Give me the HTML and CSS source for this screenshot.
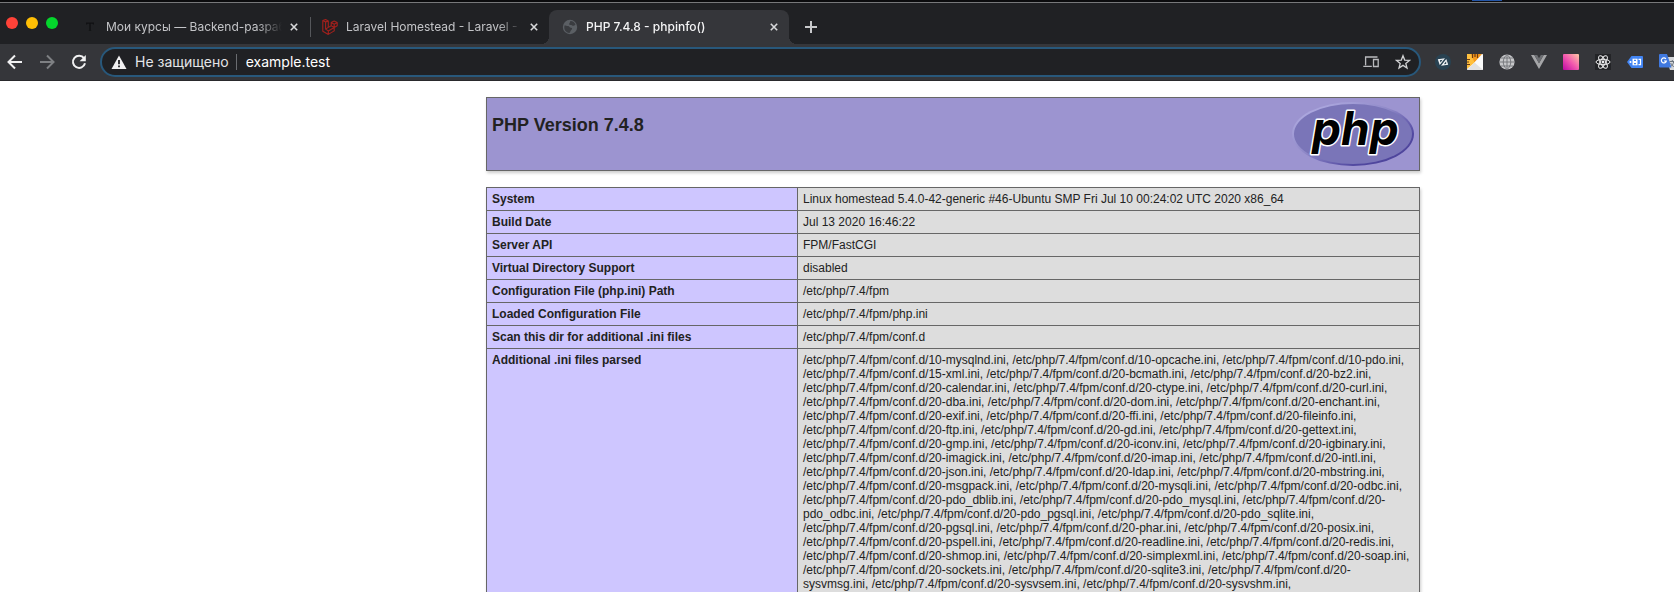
FILE: index.html
```html
<!DOCTYPE html>
<html lang="ru">
<head>
<meta charset="utf-8">
<title>PHP 7.4.8 - phpinfo()</title>
<link rel="stylesheet" href="styles.css">
</head>
<body>
<header class="browser">
  <div class="desktop-edge"><span class="desktop-mark"></span></div>
  <div class="tab-strip">
    <div class="lights">
      <button class="light light-close" aria-label="Close window"></button>
      <button class="light light-min" aria-label="Minimize window"></button>
      <button class="light light-max" aria-label="Zoom window"></button>
    </div>
    <nav class="tabs">
      <div class="tab">
        <svg class="favicon" viewBox="0 0 16 16"><path d="M4 3.500h8v2h-1l-.5-.8H8.700v6.300l1 .7H6.300l1-.7V4.700H5.500l-.5.800H4z" fill="#101113"/></svg>
        <a class="tab-title" href="#courses">Мои курсы — Backend-разработка</a>
        <button class="tab-close" aria-label="Close tab"><svg viewBox="0 0 10 10"><path d="M1 1l8 8M9 1l-8 8"/></svg></button>
      </div>
      <div class="tab tab-divided">
        <svg class="favicon" viewBox="0 0 16 16" fill="none" stroke="#a3201c" stroke-width="1.100" stroke-linejoin="round"><path d="M.8 1.500L3.600.6l2.700 1.500v6.300l2.900-1.700V3.500l3-1.500 3 1.500v3.300l-3 1.700v3.400l-5.900 3.500-5.500-3.200zM.8 1.500l2.800 1.400 2.700-.8M3.600 2.900v7.200l2.700-1.700M3.600 10.100l2.700 1.800 5.900-3.400M6.300 11.900v3.500M9.200 3.500l3 1.700 3-1.700M12.200 5.200v3.300L9.200 6.700"/></svg>
        <a class="tab-title" href="#homestead">Laravel Homestead - Laravel - The PHP</a>
        <button class="tab-close" aria-label="Close tab"><svg viewBox="0 0 10 10"><path d="M1 1l8 8M9 1l-8 8"/></svg></button>
      </div>
      <div class="tab tab-active">
        <svg class="favicon" viewBox="0 0 16 16"><circle cx="8" cy="8" r="7.200" fill="#5b5f64"/><path d="M2.500 6.500c1.500 0 2 .5 3.500.5s1.500 1.800 3 1.800 1.300 1.500.3 2.200-.8 2.500-2 3C4 13.500 1.500 11 2.500 6.500zM8.500 2c-1 1-.2 1.800-1.200 2.600s.7 1.700 1.700 1.400 1.200 1 2.500.8 1.300-1 2-1C12.700 3.500 11 2 8.500 2z" fill="#3a3c40"/></svg>
        <a class="tab-title" href="#phpinfo">PHP 7.4.8 - phpinfo()</a>
        <button class="tab-close" aria-label="Close tab"><svg viewBox="0 0 10 10"><path d="M1 1l8 8M9 1l-8 8"/></svg></button>
      </div>
    </nav>
    <button class="new-tab" aria-label="New tab"><svg viewBox="0 0 12 12"><path d="M6 0v12M0 6h12"/></svg></button>
  </div>
  <div class="toolbar">
    <div class="nav-buttons">
      <button class="nav-button" aria-label="Back"><svg viewBox="0 0 16 16"><path d="M15 8H2M8 1.500L1.500 8 8 14.500"/></svg></button>
      <button class="nav-button nav-disabled" aria-label="Forward"><svg viewBox="0 0 16 16"><path d="M1 8h13M8 1.500L14.500 8 8 14.500"/></svg></button>
      <button class="nav-button" aria-label="Reload"><svg viewBox="0 0 16 16"><path d="M13 4.200A6.100 6.100 0 1 0 14 9.300"/><path d="M14.800 1v6.200H8.600z" fill="#f1f1f2" stroke="none"/></svg></button>
    </div>
    <div class="omnibox">
      <svg class="warning" viewBox="0 0 16 16"><path d="M8 1.500L15.500 15H.5z" fill="#f1f1f2"/><path d="M7.100 6h1.800v4.200H7.100zM7.100 11.500h1.800v1.700H7.100z" fill="#202124"/></svg>
      <label class="security" for="address">Не защищено</label>
      <input class="address" id="address" type="text" value="example.test" spellcheck="false">
      <button class="box-button" aria-label="Send to device"><svg viewBox="0 0 16 16" fill="none" stroke="#b9babd" stroke-width="1.300"><path d="M14.500 3H2.600v8.300M.3 12.300h8.500"/><path d="M10.500 5.500h4.700v7h-4.700z"/></svg></button>
      <button class="box-button" aria-label="Bookmark"><svg viewBox="0 0 16 16" fill="none" stroke="#d0d1d3" stroke-width="1.300"><path d="M8 1.700l1.700 4.400 4.700.3-3.600 3 1.200 4.600L8 11.400 4 14l1.200-4.600-3.600-3 4.700-.3z"/></svg></button>
    </div>
    <div class="extensions">
      <button class="extension" aria-label="Slash extension"><svg viewBox="0 0 16 16"><circle cx="8" cy="8" r="8" fill="#294252"/><path d="M2.800 5.200l7.200-.9-5.300 6.700zM13.200 10.800l-7.200.9 5.300-6.700z" fill="#f2f5f7"/><path d="M4.800 6.200l2.800-.4-2.100 2.700zM11.200 7.300v2.600l-2.300.3z" fill="#294252"/></svg></button>
      <button class="extension" aria-label="Ruler extension"><svg viewBox="0 0 16 16"><rect width="16" height="16" rx="1" fill="#f4f4f4"/><path d="M0 0h12L7 9 0 15z" fill="#ffc03e"/><path d="M4 0h11L7.500 8.500z" fill="#f59a1c"/><path d="M16 0v16L7.500 8.500z" fill="#fafafa"/><path d="M0 16l7.500-7.500L16 16z" fill="#e2e2e2"/><path d="M5.500 0v4M8 0v3M10.500 0v4M0 5.500h3M0 8h2M0 10.500h3" stroke="#6d3b13" stroke-width="1.200"/></svg></button>
      <button class="extension" aria-label="Globe extension"><svg viewBox="0 0 16 16"><circle cx="8" cy="8" r="7.600" fill="#c6c7c9"/><path d="M8 .5v15M.5 8h15M2 4h12M2 12h12M8 .5c-5 4-5 11 0 15M8 .5c5 4 5 11 0 15" fill="none" stroke="#707276" stroke-width=".9"/></svg></button>
      <button class="extension" aria-label="Vue devtools"><svg viewBox="0 0 16 16"><path d="M0 1h3.300L8 9.200 12.700 1H16L8 15z" fill="#a5a6a8"/><path d="M3.300 1h2.900L8 4.200 9.800 1h2.900L8 9.200z" fill="#6c6e72"/></svg></button>
      <button class="extension" aria-label="Gradient extension"><svg viewBox="0 0 16 16"><defs><linearGradient id="pink" x1="0" y1="1" x2="1" y2="0"><stop offset="0" stop-color="#bd08a4"/><stop offset=".5" stop-color="#f35aae"/><stop offset="1" stop-color="#ffc9a4"/></linearGradient></defs><rect width="16" height="16" rx="1" fill="url(#pink)"/></svg></button>
      <button class="extension" aria-label="React devtools"><svg viewBox="0 0 16 16"><rect width="16" height="16" fill="#232427"/><g fill="none" stroke="#ededee" stroke-width="1"><ellipse cx="8" cy="8" rx="7" ry="2.700"/><ellipse cx="8" cy="8" rx="7" ry="2.700" transform="rotate(60 8 8)"/><ellipse cx="8" cy="8" rx="7" ry="2.700" transform="rotate(120 8 8)"/></g><circle cx="8" cy="8" r="1.400" fill="#ededee"/></svg></button>
      <button class="extension" aria-label="Tag extension"><svg viewBox="0 0 16 16"><path d="M4.500 2H15a1 1 0 0 1 1 1v10a1 1 0 0 1-1 1H4.500L0 8z" fill="#4285f4"/><path d="M5.500 4.700h5v6.600h-5z" fill="#fff"/><path d="M7 6.300h2M7 9.600h2" stroke="#4285f4" stroke-width="1.300"/><path d="M11.500 5.300h2v5.400h-2" fill="none" stroke="#fff" stroke-width="1.200"/><circle cx="3.500" cy="8" r="1" fill="#fff"/></svg></button>
      <button class="extension" aria-label="Translate"><svg viewBox="0 0 16 16"><path d="M7 3h9v13H11z" fill="#d5d7da"/><path d="M10.500 7.500h5.500M13.300 6v1.500M11 13c2-1 3.300-3 3.800-5.500M11.700 9c.7 2 2 3.300 4 4" fill="none" stroke="#6c747d"/><path d="M1 0h7l4.500 13.500H1a1 1 0 0 1-1-1V1a1 1 0 0 1 1-1z" fill="#4079e0"/><path d="M6.900 5A2.500 2.500 0 1 0 7.300 7H5" fill="none" stroke="#fff" stroke-width="1.200"/></svg></button>
    </div>
  </div>
</header>
<main class="page">
  <section class="banner">
    <h1 class="version">PHP Version 7.4.8</h1>
    <svg class="php-logo" viewBox="0 0 122 64" role="img" aria-label="PHP logo">
      <defs>
        <linearGradient id="rim" x1="0" y1="0" x2="1" y2="1"><stop offset="0" stop-color="#b9b5e8"/><stop offset=".45" stop-color="#8f89c8"/><stop offset=".75" stop-color="#5148a0"/><stop offset="1" stop-color="#4a4096"/></linearGradient>
      </defs>
      <ellipse cx="61" cy="32" rx="61" ry="32" fill="url(#rim)"/>
      <ellipse cx="61" cy="32" rx="59" ry="30" fill="#7a75b8"/>
      <text class="php-word" x="20" y="43">php</text>
    </svg>
  </section>
  <table class="info">
    <tbody>
      <tr><th scope="row">System</th><td>Linux homestead 5.4.0-42-generic #46-Ubuntu SMP Fri Jul 10 00:24:02 UTC 2020 x86_64</td></tr>
      <tr><th scope="row">Build Date</th><td>Jul 13 2020 16:46:22</td></tr>
      <tr><th scope="row">Server API</th><td>FPM/FastCGI</td></tr>
      <tr><th scope="row">Virtual Directory Support</th><td>disabled</td></tr>
      <tr><th scope="row">Configuration File (php.ini) Path</th><td>/etc/php/7.4/fpm</td></tr>
      <tr><th scope="row">Loaded Configuration File</th><td>/etc/php/7.4/fpm/php.ini</td></tr>
      <tr><th scope="row">Scan this dir for additional .ini files</th><td>/etc/php/7.4/fpm/conf.d</td></tr>
      <tr><th scope="row">Additional .ini files parsed</th><td>/etc/php/7.4/fpm/conf.d/10-mysqlnd.ini, /etc/php/7.4/fpm/conf.d/10-opcache.ini, /etc/php/7.4/fpm/conf.d/10-pdo.ini, /etc/php/7.4/fpm/conf.d/15-xml.ini, /etc/php/7.4/fpm/conf.d/20-bcmath.ini, /etc/php/7.4/fpm/conf.d/20-bz2.ini, /etc/php/7.4/fpm/conf.d/20-calendar.ini, /etc/php/7.4/fpm/conf.d/20-ctype.ini, /etc/php/7.4/fpm/conf.d/20-curl.ini, /etc/php/7.4/fpm/conf.d/20-dba.ini, /etc/php/7.4/fpm/conf.d/20-dom.ini, /etc/php/7.4/fpm/conf.d/20-enchant.ini, /etc/php/7.4/fpm/conf.d/20-exif.ini, /etc/php/7.4/fpm/conf.d/20-ffi.ini, /etc/php/7.4/fpm/conf.d/20-fileinfo.ini, /etc/php/7.4/fpm/conf.d/20-ftp.ini, /etc/php/7.4/fpm/conf.d/20-gd.ini, /etc/php/7.4/fpm/conf.d/20-gettext.ini, /etc/php/7.4/fpm/conf.d/20-gmp.ini, /etc/php/7.4/fpm/conf.d/20-iconv.ini, /etc/php/7.4/fpm/conf.d/20-igbinary.ini, /etc/php/7.4/fpm/conf.d/20-imagick.ini, /etc/php/7.4/fpm/conf.d/20-imap.ini, /etc/php/7.4/fpm/conf.d/20-intl.ini, /etc/php/7.4/fpm/conf.d/20-json.ini, /etc/php/7.4/fpm/conf.d/20-ldap.ini, /etc/php/7.4/fpm/conf.d/20-mbstring.ini, /etc/php/7.4/fpm/conf.d/20-msgpack.ini, /etc/php/7.4/fpm/conf.d/20-mysqli.ini, /etc/php/7.4/fpm/conf.d/20-odbc.ini, /etc/php/7.4/fpm/conf.d/20-pdo_dblib.ini, /etc/php/7.4/fpm/conf.d/20-pdo_mysql.ini, /etc/php/7.4/fpm/conf.d/20-pdo_odbc.ini, /etc/php/7.4/fpm/conf.d/20-pdo_pgsql.ini, /etc/php/7.4/fpm/conf.d/20-pdo_sqlite.ini, /etc/php/7.4/fpm/conf.d/20-pgsql.ini, /etc/php/7.4/fpm/conf.d/20-phar.ini, /etc/php/7.4/fpm/conf.d/20-posix.ini, /etc/php/7.4/fpm/conf.d/20-pspell.ini, /etc/php/7.4/fpm/conf.d/20-readline.ini, /etc/php/7.4/fpm/conf.d/20-redis.ini, /etc/php/7.4/fpm/conf.d/20-shmop.ini, /etc/php/7.4/fpm/conf.d/20-simplexml.ini, /etc/php/7.4/fpm/conf.d/20-soap.ini, /etc/php/7.4/fpm/conf.d/20-sockets.ini, /etc/php/7.4/fpm/conf.d/20-sqlite3.ini, /etc/php/7.4/fpm/conf.d/20-sysvmsg.ini, /etc/php/7.4/fpm/conf.d/20-sysvsem.ini, /etc/php/7.4/fpm/conf.d/20-sysvshm.ini,</td></tr>
    </tbody>
  </table>
</main>
</body>
</html>
```
FILE: styles.css
```css
* { box-sizing: border-box; }

body {
  margin: 0;
  height: 100vh;
  display: flex;
  flex-direction: column;
  overflow: hidden;
  background: #fff;
  color: #222;
  font-family: "Liberation Sans", Arial, sans-serif;
}

button {
  padding: 0;
  border: 0;
  background: none;
  flex: none;
}

svg { display: block; }

/* Browser window */
.browser {
  flex: none;
  font-family: Inter, Roboto, sans-serif;
  background: #202124;
}

.desktop-edge {
  display: flex;
  justify-content: flex-end;
  height: 3px;
  padding-right: 172px;
  background: #0b0b0d;
  border-bottom: 1px solid #77787a;
}

.desktop-mark {
  width: 30px;
  height: 1px;
  background: #2456a8;
}

.tab-strip {
  display: flex;
  height: 41px;
  padding-left: 6px;
}

.lights {
  display: flex;
  gap: 8px;
  width: 63px;
  padding-top: 14px;
}

.light {
  width: 12px;
  height: 12px;
  border-radius: 50%;
}

.light-close { background: #ff4238; }
.light-min { background: #ffbf05; }
.light-max { background: #04d62c; }

.tabs {
  display: flex;
  align-items: flex-end;
}

.tab {
  position: relative;
  display: flex;
  align-items: center;
  width: 240px;
  height: 34px;
  padding: 0 7px 0 13px;
}

.tab-divided::before {
  content: "";
  position: absolute;
  left: 1px;
  top: 7px;
  width: 1px;
  height: 20px;
  background: #55575b;
}

.tab-active {
  background: #35363a;
  border-radius: 8px 8px 0 0;
}

.tab-active::before,
.tab-active::after {
  content: "";
  position: absolute;
  bottom: 0;
  width: 8px;
  height: 8px;
}

.tab-active::before {
  right: 100%;
  background: radial-gradient(circle at 0 0, transparent 8px, #35363a 8px);
}

.tab-active::after {
  left: 100%;
  background: radial-gradient(circle at 100% 0, transparent 8px, #35363a 8px);
}

.favicon {
  flex: none;
  width: 16px;
  height: 16px;
}

.tab-title {
  flex: 1;
  min-width: 0;
  margin: 0 4px 0 8px;
  overflow: hidden;
  white-space: nowrap;
  font-size: 12px;
  line-height: 16px;
  color: #c3c4c7;
  text-decoration: none;
  -webkit-mask-image: linear-gradient(to left, transparent, #000 24px);
  mask-image: linear-gradient(to left, transparent, #000 24px);
}

.tab-active .tab-title {
  font-weight: 500;
  color: #f4f4f5;
}

.tab-close {
  width: 16px;
  height: 16px;
  padding: 4px;
}

.tab-close svg {
  width: 8px;
  height: 8px;
  overflow: visible;
  stroke: #d8d9db;
  stroke-width: 2;
}

.new-tab {
  width: 12px;
  height: 12px;
  margin: 18px 0 0 16px;
}

.new-tab svg {
  width: 12px;
  height: 12px;
  stroke: #c8c9cb;
  stroke-width: 2;
}

.toolbar {
  display: flex;
  align-items: center;
  height: 37px;
  padding-left: 7px;
  background: #35363a;
  border-bottom: 1px solid #29292c;
}

.nav-buttons {
  display: flex;
  gap: 16px;
  width: 93px;
}

.nav-button svg {
  width: 16px;
  height: 16px;
  fill: none;
  stroke: #f1f1f2;
  stroke-width: 2;
}

.nav-disabled svg { stroke: #7e8083; }

.omnibox {
  flex: 1;
  display: flex;
  align-items: center;
  height: 30px;
  padding: 0 8px 0 9px;
  border: 2px solid #28587b;
  border-radius: 15px;
  background: #202124;
  font-size: 14px;
  line-height: 18px;
}

.warning {
  flex: none;
  width: 16px;
  height: 16px;
  margin-right: 8px;
}

.security {
  padding-right: 7px;
  border-right: 1px solid #6a6c70;
  line-height: 16px;
  color: #e4e5e7;
}

.address {
  flex: 1;
  min-width: 0;
  margin-left: 9px;
  padding: 0;
  border: 0;
  outline: 0;
  background: none;
  font: inherit;
  color: #fff;
}

.box-button {
  width: 16px;
  height: 16px;
  margin-left: 16px;
}

.extensions {
  flex: none;
  display: flex;
  gap: 16px;
  width: 253px;
  padding-left: 14px;
}

.extension,
.extension svg {
  width: 16px;
  height: 16px;
}

/* phpinfo() report */
.page {
  flex: 1;
  min-height: 0;
  overflow: hidden;
  padding: 16px 254px 0 486px;
}

.banner {
  display: flex;
  justify-content: space-between;
  margin-bottom: 16px;
  padding: 4px 5px;
  border: 1px solid #666;
  background: #9c94d0;
  box-shadow: 1px 2px 3px #ccc;
}

.version {
  margin: 12px 0;
  font-size: 18px;
  line-height: 23px;
}

.php-logo {
  flex: none;
  width: 122px;
  height: 64px;
  overflow: visible;
}

.php-word {
  font-family: Inter, sans-serif;
  font-size: 46px;
  font-weight: 700;
  font-style: italic;
  fill: #000;
  stroke: #fff;
  stroke-width: 3px;
  stroke-linejoin: round;
  paint-order: stroke;
}

.info {
  width: 100%;
  border-collapse: collapse;
  box-shadow: 1px 2px 3px #ccc;
  font-size: 12px;
  line-height: 14px;
}

.info th,
.info td {
  padding: 4px 5px;
  border: 1px solid #666;
  text-align: left;
  vertical-align: baseline;
}

.info th {
  width: 311px;
  background: #cec6ff;
}

.info td {
  background: #ddd;
}
```
